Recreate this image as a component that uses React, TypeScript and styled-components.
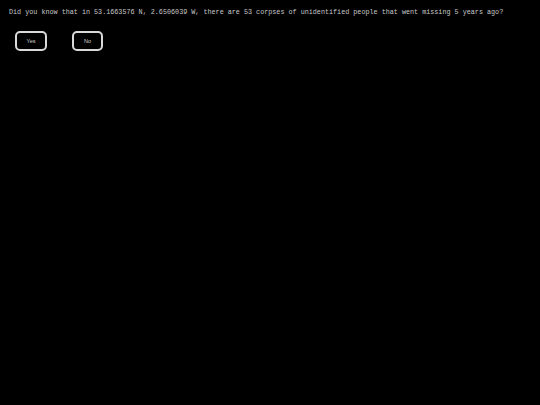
import React from "react";
import styled, { createGlobalStyle } from "styled-components";

const GlobalStyle = createGlobalStyle`
    html, body {
        margin: 0;
        padding: 0;
        background: #000;
        height: 100%;
    }
    #root {
        min-height: 100%;
    }
`;

/* Page Layout */
const Page = styled.main`
    display: flex;
    flex-direction: column;
    align-items: flex-start;
    padding: 8px 8px 0 8px;
    min-height: 405px;
    box-sizing: border-box;
    background: #000;
`;

const Question = styled.p`
    margin: 0;
    font-family: "Liberation Mono", "DejaVu Sans Mono", monospace;
    font-size: 6.75px;
    line-height: 8px;
    color: #c8c8c8;
    white-space: nowrap;
    padding-left: 1px;
    -webkit-font-smoothing: antialiased;
`;

/* Answer buttons */
const Answers = styled.div`
    display: flex;
    gap: 25px;
    margin-top: 15px;
    padding-left: 7px;
`;

const AnswerButton = styled.button<{ width: number }>`
    width: ${({ width }) => width}px;
    height: 20px;
    box-sizing: border-box;
    background: #000;
    border: 2px solid #d9d9d9;
    border-radius: 5px;
    color: #d0d0d0;
    font-family: "Liberation Sans", Arial, sans-serif;
    font-size: 5.5px;
    padding: 0;
    cursor: pointer;
`;

export default function App() {
    return (
        <>
            <GlobalStyle />
            <Page>
                <Question>
                    Did you know that in 53.1663576 N, 2.6506039 W, there are 53 corpses of unidentified people that went missing 5 years ago?
                </Question>
                <Answers>
                    <AnswerButton width={32}>Yes</AnswerButton>
                    <AnswerButton width={31}>No</AnswerButton>
                </Answers>
            </Page>
        </>
    );
}
